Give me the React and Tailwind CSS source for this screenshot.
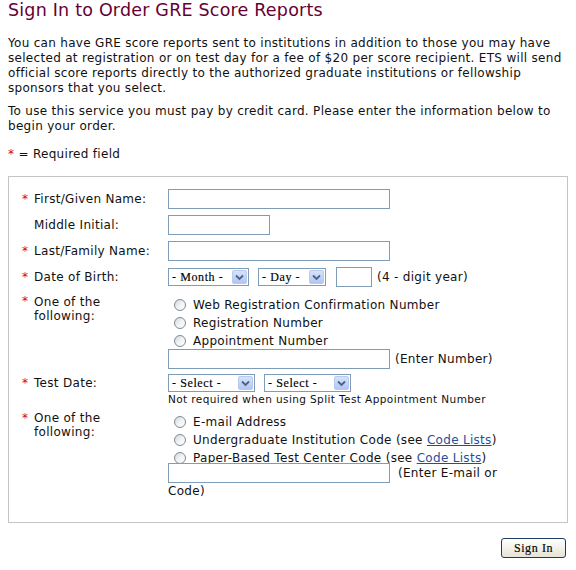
import React from "react";

function Req() {
  return <span className="inline-block w-[12px] text-[#cc0033]">*</span>;
}
function NoReq() {
  return <span className="inline-block w-[12px]"></span>;
}

function TextInput({ w }) {
  return <span className={`inline-block align-middle h-[20px] border border-[#7f9db9] bg-white ${w}`}></span>;
}

function Arrow() {
  return (
    <span className="flex items-center justify-center w-[15px] h-[14px] mr-[1px] rounded-[2px] border border-[#b9c9ef] bg-gradient-to-b from-[#d6e2fb] to-[#b2c6f3]">
      <svg width="9" height="7" viewBox="0 0 9 7">
        <path d="M1 1.5 L4.5 5 L8 1.5" fill="none" stroke="#4d6185" strokeWidth="1.8" />
      </svg>
    </span>
  );
}

function Select({ label, w }) {
  return (
    <span className={`inline-flex items-center justify-between h-[18px] border border-[#7f9db9] bg-white ${w}`}>
      <span className="pl-[3px] font-['Liberation_Serif',serif] text-[12px] leading-[16px] tracking-[0.6px] text-black [-webkit-text-stroke:0.15px_black]">{label}</span>
      <Arrow />
    </span>
  );
}

function Radio({ children }) {
  return (
    <div className="flex items-center h-[18px]">
      <span className="ml-[6px] mr-[7px] w-[12px] h-[12px] rounded-full border border-[#7c8a99] bg-gradient-to-br from-[#d4d8dc] via-[#f0f2f3] to-white"></span>
      <span className="whitespace-nowrap">{children}</span>
    </div>
  );
}

function Link({ children }) {
  return <span className="text-[#1f4f9c] underline">{children}</span>;
}

export default function App() {
  return (
    <div className="w-[576px] h-[570px] bg-white font-['DejaVu_Sans',sans-serif] text-[12px] leading-[15px] tracking-[0.3px] text-[#111] overflow-hidden">
      <div className="px-[8px] whitespace-nowrap">
        <h1 className="text-[#660033] text-[17.5px] leading-[20px] tracking-[0.2px]">Sign In to Order GRE Score Reports</h1>
        <p className="mt-[16px]">
          You can have GRE score reports sent to institutions in addition to those you may have<br />
          selected at registration or on test day for a fee of $20 per score recipient. ETS will send<br />
          official score reports directly to the authorized graduate institutions or fellowship<br />
          sponsors that you select.
        </p>
        <p className="mt-[8px]">
          To use this service you must pay by credit card. Please enter the information below to<br />
          begin your order.
        </p>
        <p className="mt-[13px]">
          <span className="text-[#cc0033]">*</span> = Required field
        </p>
      </div>

      <div className="mx-[8px] mt-[14px] h-[347px] border border-[#c4c4c4] pl-[13px] pt-[12px]">
        <div className="flex items-center h-[20px]">
          <div className="w-[146px]"><Req />First/Given Name:</div>
          <TextInput w="w-[222px]" />
        </div>
        <div className="flex items-center h-[20px] mt-[6px]">
          <div className="w-[146px]"><NoReq />Middle Initial:</div>
          <TextInput w="w-[102px]" />
        </div>
        <div className="flex items-center h-[20px] mt-[6px]">
          <div className="w-[146px]"><Req />Last/Family Name:</div>
          <TextInput w="w-[222px]" />
        </div>
        <div className="flex items-center h-[20px] mt-[6px]">
          <div className="w-[146px]"><Req />Date of Birth:</div>
          <Select label="- Month -" w="w-[81px]" />
          <span className="ml-[9px]"><Select label="- Day -" w="w-[68px]" /></span>
          <span className="ml-[10px]"><TextInput w="w-[36px]" /></span>
          <span className="ml-[5px]">(4 - digit year)</span>
        </div>

        <div className="flex mt-[7px]">
          <div className="w-[146px] flex">
            <Req />
            <span className="leading-[14px] pt-[1px]">One of the<br />following:</span>
          </div>
          <div className="pt-[2px]">
            <Radio>Web Registration Confirmation Number</Radio>
            <Radio>Registration Number</Radio>
            <Radio>Appointment Number</Radio>
            <div className="flex items-center -mt-[1px]">
              <TextInput w="w-[222px]" />
              <span className="ml-[5px]">(Enter Number)</span>
            </div>
          </div>
        </div>

        <div className="flex mt-[5px]">
          <div className="w-[146px] h-[18px] flex items-center"><Req />Test Date:</div>
          <div>
            <div className="flex items-center">
              <Select label="- Select -" w="w-[87px]" />
              <span className="ml-[9px]"><Select label="- Select -" w="w-[87px]" /></span>
            </div>
            <div className="text-[10.5px] leading-[13px] mt-[1px] tracking-[0.4px] whitespace-nowrap">Not required when using Split Test Appointment Number</div>
          </div>
        </div>

        <div className="flex mt-[7px]">
          <div className="w-[146px] flex -mt-[2px]">
            <Req />
            <span className="leading-[14px]">One of the<br />following:</span>
          </div>
          <div>
            <Radio>E-mail Address</Radio>
            <Radio>Undergraduate Institution Code (see <Link>Code Lists</Link>)</Radio>
            <Radio>Paper-Based Test Center Code (see <Link>Code Lists</Link>)</Radio>
            <div className="flex items-center -mt-[4px]">
              <TextInput w="w-[222px]" />
              <span className="ml-[8px]">(Enter E-mail or</span>
            </div>
            <div className="leading-[16px]">Code)</div>
          </div>
        </div>
      </div>

      <div className="flex justify-end pr-[10px] mt-[15px]">
        <button className="w-[65px] h-[20px] rounded-[3px] border border-[#1c3c64] bg-gradient-to-b from-white to-[#e6e3d6] font-['Liberation_Serif',serif] text-[12px] tracking-[0.6px] text-black [-webkit-text-stroke:0.15px_black] leading-[18px]">
          Sign In
        </button>
      </div>
    </div>
  );
}
